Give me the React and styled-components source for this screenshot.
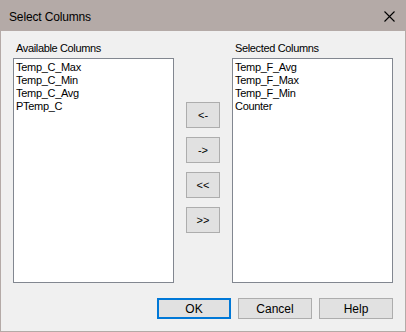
import React from 'react';
import styled, { createGlobalStyle } from 'styled-components';

const GlobalStyle = createGlobalStyle`
    html, body {
        margin: 0;
        padding: 0;
        background: #f0f0f0;
    }
`;

const Window = styled.div`
    box-sizing: border-box;
    width: 406px;
    height: 332px;
    border: 1px solid #b4aaa7;
    background: #f0f0f0;
    display: flex;
    flex-direction: column;
    font-family: "Liberation Sans", Arial, sans-serif;
    color: #000;
`;

const TitleBar = styled.div`
    height: 30px;
    flex: none;
    background: #b4aaa7;
    display: flex;
    align-items: center;
    justify-content: space-between;
    padding: 0 10px 0 8px;
`;

const Title = styled.span`
    font-size: 12px;
    letter-spacing: -0.15px;
    margin-top: 1px;
`;

const Body = styled.div`
    flex: 1;
    display: flex;
    flex-direction: column;
    padding: 0 12px;
`;

const Columns = styled.div`
    display: grid;
    grid-template-columns: 161px 34px 161px;
    column-gap: 12px;
`;

const Panel = styled.div`
    display: flex;
    flex-direction: column;
`;

const Label = styled.div`
    font-size: 11px;
    line-height: 13px;
    letter-spacing: -0.35px;
    margin: 11px 0 3px 3px;
`;

const List = styled.div`
    box-sizing: border-box;
    height: 225px;
    border: 1px solid #828790;
    background: #fff;
    padding: 2px 2px;
`;

const Item = styled.div`
    font-size: 11px;
    line-height: 13px;
    letter-spacing: -0.3px;
    white-space: nowrap;
`;

const Arrows = styled.div`
    display: flex;
    flex-direction: column;
    gap: 9px;
    padding-top: 71px;
`;

const Button = styled.button`
    box-sizing: border-box;
    width: ${p => p.$w}px;
    height: ${p => p.$h}px;
    padding: 0;
    background: #e1e1e1;
    border: ${p => (p.$primary ? '2px solid #0078d7' : '1px solid #adadad')};
    font-family: "Liberation Sans", Arial, sans-serif;
    font-size: ${p => p.$size}px;
    color: #000;
`;

const Footer = styled.div`
    display: flex;
    justify-content: flex-end;
    gap: 7px;
    margin-top: 15px;
`;

const CloseIcon = () => (
    <svg width="11" height="11" viewBox="0 0 11 11">
        <path d="M0.5 0.5 L10.5 10.5 M10.5 0.5 L0.5 10.5" stroke="#000" strokeWidth="1.1" fill="none" />
    </svg>
);

const available = ['Temp_C_Max', 'Temp_C_Min', 'Temp_C_Avg', 'PTemp_C'];
const selected = ['Temp_F_Avg', 'Temp_F_Max', 'Temp_F_Min', 'Counter'];

export default function App() {
    return (
        <>
            <GlobalStyle />
            <Window>
                <TitleBar>
                    <Title>Select Columns</Title>
                    <CloseIcon />
                </TitleBar>
                <Body>
                    <Columns>
                        <Panel>
                            <Label>Available Columns</Label>
                            <List>
                                {available.map(c => <Item key={c}>{c}</Item>)}
                            </List>
                        </Panel>
                        <Arrows>
                            {['<-', '->', '<<', '>>'].map(a => (
                                <Button key={a} $w={34} $h={26} $size={11}>{a}</Button>
                            ))}
                        </Arrows>
                        <Panel>
                            <Label>Selected Columns</Label>
                            <List>
                                {selected.map(c => <Item key={c}>{c}</Item>)}
                            </List>
                        </Panel>
                    </Columns>
                    <Footer>
                        <Button $w={74} $h={21} $size={12} $primary>OK</Button>
                        <Button $w={74} $h={21} $size={12}>Cancel</Button>
                        <Button $w={74} $h={21} $size={12}>Help</Button>
                    </Footer>
                </Body>
            </Window>
        </>
    );
}
